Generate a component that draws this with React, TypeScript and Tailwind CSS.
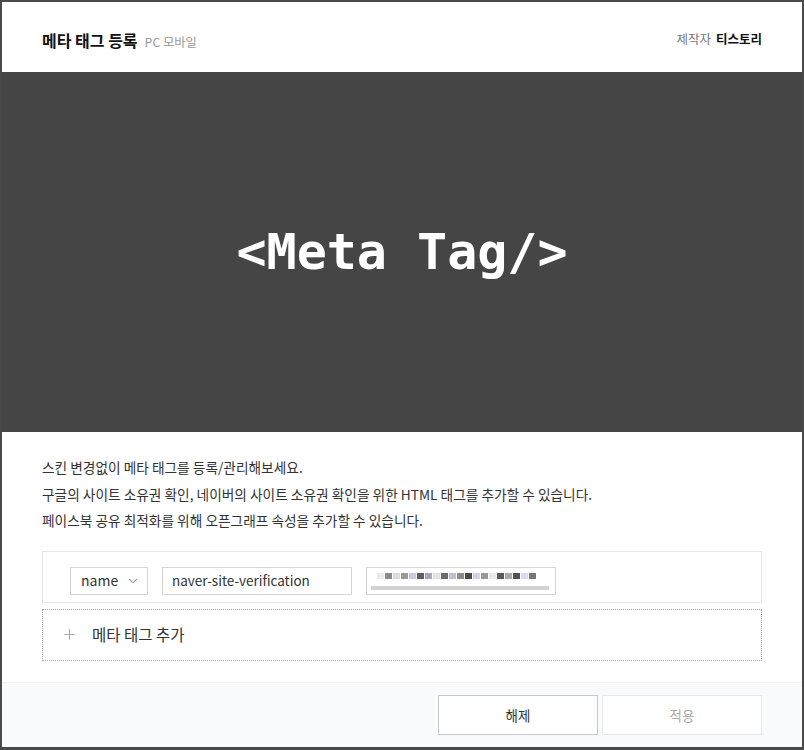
import { ChevronDown, Plus } from 'lucide-react'

const blur = ['#ececec', '#8a8a8a', '#dcdcdc', '#9a9a9a', '#c8cbd8', '#5f5f5f', '#a6a6b4', '#e4e4e4', '#6a6a6a', '#bcc0d0', '#8a8a8a', '#4a4a4a', '#d2d6e4', '#999', '#e8e8e8', '#5a5a5a', '#aaa', '#505050', '#d8dce8', '#777']

const MetaTagDialog = () => {
    return (
        <div
            className="w-[804px] h-[750px] bg-[#4a4a4a] pt-[2px] pl-[2px] pr-[2px] pb-[3px]"
            style={{ fontFamily: '"Noto Sans CJK KR", "Noto Sans", sans-serif' }}
        >
            <div className="h-full bg-white flex flex-col">
                <div className="h-[70px] flex items-center justify-between pl-[40px] pr-[40px]">
                    <div className="flex items-baseline gap-[7px] pt-[5px]">
                        <span className="text-[16px] font-bold text-[#111]">메타 태그 등록</span>
                        <span className="text-[12.3px] text-[#999]">PC 모바일</span>
                    </div>
                    <div className="flex items-baseline gap-[5px] pt-[5px] text-[12.5px]">
                        <span className="text-[#777]">제작자</span>
                        <span className="text-[#111] font-bold">티스토리</span>
                    </div>
                </div>

                <div className="h-[360px] bg-[#454545] flex items-center justify-center">
                    <span
                        className="text-white text-[50px] font-bold leading-none"
                        style={{ fontFamily: '"DejaVu Sans Mono", monospace' }}
                    >
                        {'<Meta Tag/>'}
                    </span>
                </div>

                <div className="pl-[40px] pr-[40px] pt-[22px] text-[13.7px] text-[#333] leading-[26.5px]">
                    <p>스킨 변경없이 메타 태그를 등록/관리해보세요.</p>
                    <p>구글의 사이트 소유권 확인, 네이버의 사이트 소유권 확인을 위한 HTML 태그를 추가할 수 있습니다.</p>
                    <p>페이스북 공유 최적화를 위해 오픈그래프 속성을 추가할 수 있습니다.</p>
                </div>

                <div className="pl-[40px] pr-[40px] pt-[17px]">
                    <div className="h-[52px] border border-[#e5e5e5] flex items-start gap-[14px] pl-[27px] pt-[15px]">
                        <div className="w-[78px] h-[28px] border border-[#d5d5d5] flex items-center pl-[10px] gap-[8px] text-[14px] text-[#333]">
                            <span>name</span>
                            <ChevronDown className="w-[14px] h-[14px] text-[#555]" strokeWidth={1.5} />
                        </div>
                        <div className="w-[190px] h-[28px] border border-[#d5d5d5] flex items-center pl-[9px] text-[13.5px] text-[#333]">
                            naver-site-verification
                        </div>
                        <div className="w-[190px] h-[28px] border border-[#d5d5d5] flex flex-col justify-between pl-[4px] pr-[2px] pt-[5px] pb-[4px]">
                            <div className="flex gap-[1px] pl-[6px]">
                                {blur.map((c, i) => (
                                    <div key={i} className="w-[7px] h-[6px]" style={{ backgroundColor: c }} />
                                ))}
                            </div>
                            <div className="h-[4px] bg-[#d2d2d2] mr-[4px]" />
                        </div>
                    </div>
                    <div className="h-[52px] mt-[6px] border border-dotted border-[#aaa] flex items-center pl-[18px] gap-[14px] text-[15.5px] text-[#333]">
                        <Plus className="w-[17px] h-[17px] text-[#888]" strokeWidth={1} />
                        <span>메타 태그 추가</span>
                    </div>
                </div>

                <div className="mt-auto h-[65px] bg-[#f9fafc] border-t border-[#f0f0f0] flex items-center justify-end gap-[4px] pr-[40px]">
                    <button className="w-[160px] h-[40px] bg-white border border-[#c8c8c8] text-[13.5px] text-[#333]">해제</button>
                    <button className="w-[160px] h-[40px] bg-white border border-[#e8e8e8] text-[13.5px] text-[#aaa]">적용</button>
                </div>
            </div>
        </div>
    )
}

export default function App() {
    return <MetaTagDialog />
}
